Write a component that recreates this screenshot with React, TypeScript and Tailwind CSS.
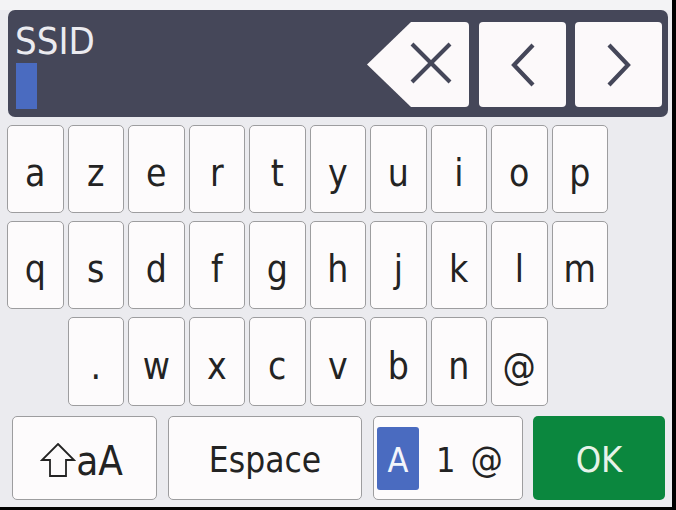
import React from "react";

const font = { fontFamily: '"DejaVu Sans Condensed", "DejaVu Sans", "Liberation Sans", sans-serif' };

function Key({ label, extra = "" }: { label: string; extra?: string }) {
  return (
    <div
      className={
        "w-[56.5px] h-full shrink-0 rounded-[5px] border-[1.5px] border-[#9d9d9f] bg-[#fdfbfc] flex items-center justify-center text-[37px] leading-none text-[#232323] pt-[9px] " +
        extra
      }
    >
      {label}
    </div>
  );
}

function Chevron({ dir }: { dir: "left" | "right" }) {
  return (
    <svg width="28" height="46" viewBox="0 0 28 46" fill="none">
      {dir === "left" ? (
        <polyline points="24,3 5,23 24,43" stroke="#454759" strokeWidth="4.2" strokeLinejoin="miter" />
      ) : (
        <polyline points="4,3 23,23 4,43" stroke="#454759" strokeWidth="4.2" strokeLinejoin="miter" />
      )}
    </svg>
  );
}

export default function App() {
  const row1 = ["a", "z", "e", "r", "t", "y", "u", "i", "o", "p"];
  const row2 = ["q", "s", "d", "f", "g", "h", "j", "k", "l", "m"];
  const row3 = [".", "w", "x", "c", "v", "b", "n", "@"];
  return (
    <div className="w-[676px] h-[510px] bg-black" style={font}>
      <div className="w-[672px] h-[507px] bg-[#ebebef] flex flex-col">
        <div className="h-[10px] bg-[#f3f3f5]" />
        {/* Header */}
        <div className="ml-[8px] mr-[4px] h-[107px] rounded-[7px] bg-[#454759] flex">
          <div className="flex-1 flex flex-col pl-[7px] pt-[12px]">
            <div className="text-[38px] leading-none text-[#ebebf0] h-[38px]">SSID</div>
            <div className="mt-[3px] ml-[1px] w-[21px] h-[46px] bg-[#4a6bc0]" />
          </div>
          <div className="flex items-start pt-[12px] pr-[6px]">
            <svg width="102" height="85" viewBox="0 0 102 85">
              <path d="M44 0 H98 Q102 0 102 4 V81 Q102 85 98 85 H44 L0 42.5 Z" fill="#fcf9fa" />
              <line x1="45" y1="22" x2="83" y2="60" stroke="#454759" strokeWidth="4" />
              <line x1="83" y1="22" x2="45" y2="60" stroke="#454759" strokeWidth="4" />
            </svg>
            <div className="ml-[10px] w-[87px] h-[85px] rounded-[4px] bg-[#fcf9fa] flex items-center justify-center">
              <Chevron dir="left" />
            </div>
            <div className="ml-[9px] w-[87px] h-[85px] rounded-[4px] bg-[#fcf9fa] flex items-center justify-center">
              <Chevron dir="right" />
            </div>
          </div>
        </div>
        {/* Row 1 */}
        <div className="mt-[8px] h-[88px] pl-[7px] flex gap-[4px]">
          {row1.map((k) => (
            <Key key={k} label={k} />
          ))}
        </div>
        {/* Row 2 */}
        <div className="mt-[8px] h-[88px] pl-[7px] flex gap-[4px]">
          {row2.map((k) => (
            <Key key={k} label={k} />
          ))}
        </div>
        {/* Row 3 */}
        <div className="mt-[8px] h-[89px] pl-[67.5px] flex gap-[4px]">
          {row3.map((k) => (
            <Key key={k} label={k} />
          ))}
        </div>
        {/* Row 4 */}
        <div className="mt-[10px] h-[84px] pl-[12px] flex">
          <div className="w-[145px] h-full rounded-[5px] border-[1.5px] border-[#9d9d9f] bg-[#fdfbfc] flex items-center justify-center text-[#232323]">
            <svg width="36" height="35" viewBox="0 0 36 35" className="mt-[4px]">
              <path d="M18 1 L34 17 H26 V33 H10 V17 H2 Z" fill="none" stroke="#232323" strokeWidth="1.8" strokeLinejoin="miter" />
            </svg>
            <span className="text-[40px] leading-none pt-[6px] mr-[6px]">aA</span>
          </div>
          <div className="ml-[11px] w-[194px] h-full rounded-[5px] border-[1.5px] border-[#9d9d9f] bg-[#fdfbfc] flex items-center justify-center text-[35px] leading-none text-[#232323] pt-[4px]">
            Espace
          </div>
          <div className="ml-[11px] w-[150px] h-full rounded-[5px] border-[1.5px] border-[#9d9d9f] bg-[#fdfbfc] flex items-center pl-[3px] text-[#232323]">
            <div className="w-[42px] h-[63px] rounded-[3px] bg-[#4a6bc0] text-[#f3f5fb] text-[34px] leading-none flex items-center justify-center pt-[3px]">
              A
            </div>
            <span className="ml-[17px] text-[34px] leading-none pt-[4px]">1</span>
            <span className="ml-[15px] text-[36px] leading-none pt-[4px] font-light">@</span>
          </div>
          <div className="ml-[10px] w-[132px] h-full rounded-[5px] bg-[#0b873e] flex items-center justify-center text-[36px] leading-none text-[#e6f3e9] pt-[4px]">
            OK
          </div>
        </div>
      </div>
    </div>
  );
}
